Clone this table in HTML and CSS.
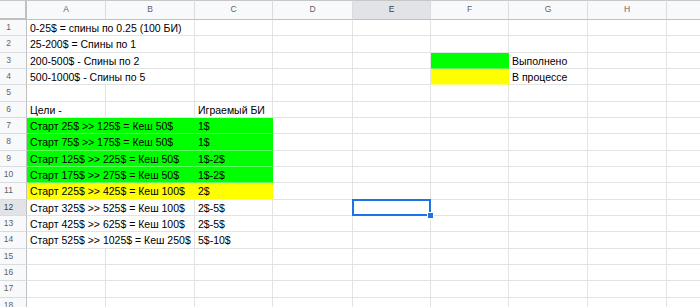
FILE: index.html
```html
<!doctype html>
<html lang="ru">
<head>
  <meta charset="utf-8">
  <title>Спины</title>
  <link rel="stylesheet" href="styles.css">
</head>
<body>

  <div class="sheet">
    <!-- column headers -->
    <div class="hd corner"></div>
    <div class="hd">A</div><div class="hd">B</div><div class="hd">C</div><div class="hd">D</div>
    <div class="hd sel">E</div><div class="hd">F</div><div class="hd">G</div><div class="hd">H</div><div class="hd"></div>

    <div class="rh">1</div>
    <div class="c ov">0-25$ = спины по 0.25 (100 БИ)</div>
    <div class="c"></div><div class="c"></div><div class="c"></div><div class="c"></div><div class="c"></div><div class="c"></div><div class="c"></div>

    <div class="rh">2</div>
    <div class="c ov">25-200$ = Спины по 1</div>
    <div class="c"></div><div class="c"></div><div class="c"></div><div class="c"></div><div class="c"></div><div class="c"></div><div class="c"></div>

    <div class="rh">3</div>
    <div class="c ov">200-500$ - Спины по 2</div>
    <div class="c"></div><div class="c"></div><div class="c"></div>
    <div class="c g"></div><div class="c">Выполнено</div><div class="c"></div><div class="c"></div>

    <div class="rh">4</div>
    <div class="c ov">500-1000$ - Спины по 5</div>
    <div class="c"></div><div class="c"></div><div class="c"></div>
    <div class="c y"></div><div class="c">В процессе</div><div class="c"></div><div class="c"></div>

    <div class="rh">5</div>
    <div class="c"></div><div class="c"></div><div class="c"></div><div class="c"></div><div class="c"></div><div class="c"></div><div class="c"></div><div class="c"></div><div class="c"></div>

    <div class="rh">6</div>
    <div class="c">Цели -</div><div class="c"></div><div class="c">Играемый БИ</div>
    <div class="c"></div><div class="c"></div><div class="c"></div><div class="c"></div><div class="c"></div><div class="c"></div>

    <!-- goals -->
    <div class="rh">7</div>
    <div class="c ov g">Старт 25$ &gt;&gt; 125$ = Кеш 50$</div><div class="c g">1$</div>
    <div class="c"></div><div class="c"></div><div class="c"></div><div class="c"></div><div class="c"></div><div class="c"></div>

    <div class="rh">8</div>
    <div class="c ov g">Старт 75$ &gt;&gt; 175$ = Кеш 50$</div><div class="c g">1$</div>
    <div class="c"></div><div class="c"></div><div class="c"></div><div class="c"></div><div class="c"></div><div class="c"></div>

    <div class="rh">9</div>
    <div class="c ov g">Старт 125$ &gt;&gt; 225$ = Кеш 50$</div><div class="c g">1$-2$</div>
    <div class="c"></div><div class="c"></div><div class="c"></div><div class="c"></div><div class="c"></div><div class="c"></div>

    <div class="rh">10</div>
    <div class="c ov g">Старт 175$ &gt;&gt; 275$ = Кеш 50$</div><div class="c g">1$-2$</div>
    <div class="c"></div><div class="c"></div><div class="c"></div><div class="c"></div><div class="c"></div><div class="c"></div>

    <div class="rh">11</div>
    <div class="c ov y">Старт 225$ &gt;&gt; 425$ = Кеш 100$</div><div class="c y">2$</div>
    <div class="c"></div><div class="c"></div><div class="c"></div><div class="c"></div><div class="c"></div><div class="c"></div>

    <div class="rh sel">12</div>
    <div class="c ov">Старт 325$ &gt;&gt; 525$ = Кеш 100$</div><div class="c">2$-5$</div>
    <div class="c"></div><div class="c cur"></div><div class="c"></div><div class="c"></div><div class="c"></div><div class="c"></div>

    <div class="rh">13</div>
    <div class="c ov">Старт 425$ &gt;&gt; 625$ = Кеш 100$</div><div class="c">2$-5$</div>
    <div class="c"></div><div class="c"></div><div class="c"></div><div class="c"></div><div class="c"></div><div class="c"></div>

    <div class="rh">14</div>
    <div class="c ov">Старт 525$ &gt;&gt; 1025$ = Кеш 250$</div><div class="c">5$-10$</div>
    <div class="c"></div><div class="c"></div><div class="c"></div><div class="c"></div><div class="c"></div><div class="c"></div>

    <div class="rh">15</div>
    <div class="c"></div><div class="c"></div><div class="c"></div><div class="c"></div><div class="c"></div><div class="c"></div><div class="c"></div><div class="c"></div><div class="c"></div>

    <div class="rh">16</div>
    <div class="c"></div><div class="c"></div><div class="c"></div><div class="c"></div><div class="c"></div><div class="c"></div><div class="c"></div><div class="c"></div><div class="c"></div>

    <div class="rh">17</div>
    <div class="c"></div><div class="c"></div><div class="c"></div><div class="c"></div><div class="c"></div><div class="c"></div><div class="c"></div><div class="c"></div><div class="c"></div>

    <div class="rh">18</div>
    <div class="c"></div><div class="c"></div><div class="c"></div><div class="c"></div><div class="c"></div><div class="c"></div><div class="c"></div><div class="c"></div><div class="c"></div>
  </div>

</body>
</html>
```

FILE: styles.css
```css
body {
  background-color: white;
  font: 10.5px 'Liberation Sans', Arial, sans-serif;
  color: #000;
  margin: 0px;
  padding: 0px;
  overflow: hidden;
}

.sheet {
  display: grid;
  grid-template-columns: 27px 79px 89px 78px 80px 78px 78px 79px 79px 40px;
  grid-template-rows: 20px;
  grid-auto-rows: 16.33px;
  width: 727px;
}

/* headers */
.hd, .rh {
  box-sizing: border-box;
  background-color: #f8f9fa;
  color: #5f6368;
  font-size: 8.5px;
  text-align: center;
}
.hd {
  border-top: 1px solid #c7c7c7;
  border-right: 1px solid #dadce0;
  border-bottom: 1px solid #c0c0c0;
  line-height: 17px;
}
.rh {
  border-right: 1px solid #c0c0c0;
  border-bottom: 1px solid #dadce0;
  padding-right: 9px;
  line-height: 15px;
}
.corner {
  border-right: 2px solid #c0c0c0;
  border-bottom: 2px solid #c0c0c0;
}
.hd.sel, .rh.sel {
  background-color: #e1e3e6;
  color: #3c4043;
}

/* cells */
.c {
  box-sizing: border-box;
  border-right: 1px solid #e2e3e3;
  border-bottom: 1px solid #e2e3e3;
  padding: 1px 3px 0;
  line-height: 15px;
  white-space: nowrap;
  overflow: hidden;
}
.ov {
  grid-column: span 2;
}
/* filled cells hide the grid, only a faint seam stays between rows */
.g {
  background-color: #00ff00;
  border-right-color: #00ff00;
  border-bottom-color: #5cfa5c;
}
.y {
  background-color: #ffff00;
  border-right-color: #ffff00;
  border-bottom-color: #fafa6a;
}

/* active cell */
.cur {
  position: relative;
  overflow: visible;
}
.cur::before {
  content: "";
  position: absolute;
  top: -1px;
  left: -1px;
  right: -1px;
  bottom: -1px;
  border: 2px solid #1a73e8;
}
.cur::after {
  content: "";
  position: absolute;
  right: -4px;
  bottom: -4px;
  width: 5px;
  height: 5px;
  background-color: #1a73e8;
  border: 1px solid #fff;
}
```
